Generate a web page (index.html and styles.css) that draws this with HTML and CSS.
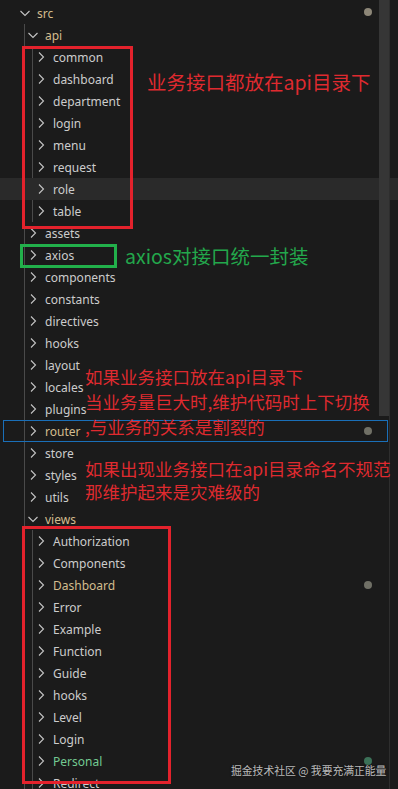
FILE: index.html
```html
<!DOCTYPE html>
<html lang="zh">
<head>
<meta charset="utf-8">
<title>Explorer</title>
<link rel="stylesheet" href="styles.css">
</head>
<body>
<div class="explorer">
  <div class="tree">
    <div class="row l0 mod"><svg class="chev" viewBox="0 0 16 16"><path d="M3.5 6l4.5 4.5L12.5 6"/></svg><span>src</span><i class="dot dot-mod"></i></div>
    <div class="group g1">
      <div class="row l1 mod"><svg class="chev" viewBox="0 0 16 16"><path d="M3.5 6l4.5 4.5L12.5 6"/></svg><span>api</span></div>
      <div class="group g2">
        <div class="row l2"><svg class="chev" viewBox="0 0 16 16"><path d="M6 3.5l4.5 4.5L6 12.5"/></svg><span>common</span></div>
        <div class="row l2"><svg class="chev" viewBox="0 0 16 16"><path d="M6 3.5l4.5 4.5L6 12.5"/></svg><span>dashboard</span></div>
        <div class="row l2"><svg class="chev" viewBox="0 0 16 16"><path d="M6 3.5l4.5 4.5L6 12.5"/></svg><span>department</span></div>
        <div class="row l2"><svg class="chev" viewBox="0 0 16 16"><path d="M6 3.5l4.5 4.5L6 12.5"/></svg><span>login</span></div>
        <div class="row l2"><svg class="chev" viewBox="0 0 16 16"><path d="M6 3.5l4.5 4.5L6 12.5"/></svg><span>menu</span></div>
        <div class="row l2"><svg class="chev" viewBox="0 0 16 16"><path d="M6 3.5l4.5 4.5L6 12.5"/></svg><span>request</span></div>
        <div class="row l2 hover"><svg class="chev" viewBox="0 0 16 16"><path d="M6 3.5l4.5 4.5L6 12.5"/></svg><span>role</span></div>
        <div class="row l2"><svg class="chev" viewBox="0 0 16 16"><path d="M6 3.5l4.5 4.5L6 12.5"/></svg><span>table</span></div>
      </div>
      <div class="row l1"><svg class="chev" viewBox="0 0 16 16"><path d="M6 3.5l4.5 4.5L6 12.5"/></svg><span>assets</span></div>
      <div class="row l1"><svg class="chev" viewBox="0 0 16 16"><path d="M6 3.5l4.5 4.5L6 12.5"/></svg><span>axios</span></div>
      <div class="row l1"><svg class="chev" viewBox="0 0 16 16"><path d="M6 3.5l4.5 4.5L6 12.5"/></svg><span>components</span></div>
      <div class="row l1"><svg class="chev" viewBox="0 0 16 16"><path d="M6 3.5l4.5 4.5L6 12.5"/></svg><span>constants</span></div>
      <div class="row l1"><svg class="chev" viewBox="0 0 16 16"><path d="M6 3.5l4.5 4.5L6 12.5"/></svg><span>directives</span></div>
      <div class="row l1"><svg class="chev" viewBox="0 0 16 16"><path d="M6 3.5l4.5 4.5L6 12.5"/></svg><span>hooks</span></div>
      <div class="row l1"><svg class="chev" viewBox="0 0 16 16"><path d="M6 3.5l4.5 4.5L6 12.5"/></svg><span>layout</span></div>
      <div class="row l1"><svg class="chev" viewBox="0 0 16 16"><path d="M6 3.5l4.5 4.5L6 12.5"/></svg><span>locales</span></div>
      <div class="row l1"><svg class="chev" viewBox="0 0 16 16"><path d="M6 3.5l4.5 4.5L6 12.5"/></svg><span>plugins</span></div>
      <div class="row l1 mod focused"><svg class="chev" viewBox="0 0 16 16"><path d="M6 3.5l4.5 4.5L6 12.5"/></svg><span>router</span><i class="dot dot-mod2"></i></div>
      <div class="row l1"><svg class="chev" viewBox="0 0 16 16"><path d="M6 3.5l4.5 4.5L6 12.5"/></svg><span>store</span></div>
      <div class="row l1"><svg class="chev" viewBox="0 0 16 16"><path d="M6 3.5l4.5 4.5L6 12.5"/></svg><span>styles</span></div>
      <div class="row l1"><svg class="chev" viewBox="0 0 16 16"><path d="M6 3.5l4.5 4.5L6 12.5"/></svg><span>utils</span></div>
      <div class="row l1 mod"><svg class="chev" viewBox="0 0 16 16"><path d="M3.5 6l4.5 4.5L12.5 6"/></svg><span>views</span></div>
      <div class="group g2">
        <div class="row l2"><svg class="chev" viewBox="0 0 16 16"><path d="M6 3.5l4.5 4.5L6 12.5"/></svg><span>Authorization</span></div>
        <div class="row l2"><svg class="chev" viewBox="0 0 16 16"><path d="M6 3.5l4.5 4.5L6 12.5"/></svg><span>Components</span></div>
        <div class="row l2 mod"><svg class="chev" viewBox="0 0 16 16"><path d="M6 3.5l4.5 4.5L6 12.5"/></svg><span>Dashboard</span><i class="dot dot-mod2"></i></div>
        <div class="row l2"><svg class="chev" viewBox="0 0 16 16"><path d="M6 3.5l4.5 4.5L6 12.5"/></svg><span>Error</span></div>
        <div class="row l2"><svg class="chev" viewBox="0 0 16 16"><path d="M6 3.5l4.5 4.5L6 12.5"/></svg><span>Example</span></div>
        <div class="row l2"><svg class="chev" viewBox="0 0 16 16"><path d="M6 3.5l4.5 4.5L6 12.5"/></svg><span>Function</span></div>
        <div class="row l2"><svg class="chev" viewBox="0 0 16 16"><path d="M6 3.5l4.5 4.5L6 12.5"/></svg><span>Guide</span></div>
        <div class="row l2"><svg class="chev" viewBox="0 0 16 16"><path d="M6 3.5l4.5 4.5L6 12.5"/></svg><span>hooks</span></div>
        <div class="row l2"><svg class="chev" viewBox="0 0 16 16"><path d="M6 3.5l4.5 4.5L6 12.5"/></svg><span>Level</span></div>
        <div class="row l2"><svg class="chev" viewBox="0 0 16 16"><path d="M6 3.5l4.5 4.5L6 12.5"/></svg><span>Login</span></div>
        <div class="row l2 new"><svg class="chev" viewBox="0 0 16 16"><path d="M6 3.5l4.5 4.5L6 12.5"/></svg><span>Personal</span><i class="dot dot-new"></i></div>
        <div class="row l2"><svg class="chev" viewBox="0 0 16 16"><path d="M6 3.5l4.5 4.5L6 12.5"/></svg><span>Redirect</span></div>
      </div>
    </div>
  </div>

  <div class="scroll-thumb"></div>
  <div class="scroll-edge"></div>

  <div class="box box-red box-api"></div>
  <div class="box box-green box-axios"></div>
  <div class="box box-red box-views"></div>

  <p class="note note-red note-api">业务接口都放在api目录下</p>
  <p class="note note-green note-axios">axios对接口统一封装</p>
  <p class="note note-red note-mid">如果业务接口放在api目录下<br>当业务量巨大时,维护代码时上下切换<br>,与业务的关系是割裂的</p>
  <p class="note note-red note-low">如果出现业务接口在api目录命名不规范<br>那维护起来是灾难级的</p>

  <p class="watermark">掘金技术社区 @ 我要充满正能量</p>
</div>
</body>
</html>
```

FILE: styles.css
```css
* { box-sizing: border-box; }

html, body {
  margin: 0;
  padding: 0;
  background: #1b1b1b;
  overflow: hidden;
}

.explorer {
  position: relative;
  width: 398px;
  height: 789px;
  overflow: hidden;
  background: #1b1b1b;
  font-family: "Noto Sans", "Open Sans", sans-serif;
  font-size: 12px;
  color: #cccccc;
}

.tree {
  padding-top: 2px;
}

.group.g1 {
  background: linear-gradient(#4a4a4a, #4a4a4a) no-repeat 24px 0 / 1px 100%;
}

.group.g2 {
  background: linear-gradient(#4a4a4a, #4a4a4a) no-repeat 32px 0 / 1px 100%;
}

.row {
  position: relative;
  height: 22px;
  display: flex;
  align-items: center;
  gap: 4px;
  white-space: nowrap;
}

.row.l0 { padding-left: 17px; }
.row.l1 { padding-left: 25px; }
.row.l2 { padding-left: 33px; }

.chev {
  width: 16px;
  height: 16px;
  flex: none;
  fill: none;
  stroke: #c5c5c5;
  stroke-width: 1.1;
}

.row.mod span { color: #d3bd8e; }
.row.new span { color: #73c991; }

.row.hover {
  background: #2a2a2a;
}

.row.focused::after {
  content: "";
  position: absolute;
  left: 3px;
  right: 10px;
  top: 0;
  bottom: 0;
  border: 1px solid #1a6fb8;
}

.dot {
  position: absolute;
  left: 364px;
  top: 7px;
  width: 8px;
  height: 8px;
  border-radius: 50%;
}
.row.l0 .dot { top: 6px; }
.dot-mod { background: #8d8778; }
.dot-mod2 { background: #707066; }
.dot-new { background: #3c7158; }

.scroll-thumb {
  position: absolute;
  left: 379px;
  top: 0;
  width: 10px;
  height: 416px;
  background: #363636;
}

.scroll-edge {
  position: absolute;
  left: 389px;
  top: 0;
  width: 1px;
  height: 789px;
  background: #2e2e2e;
}

.box {
  position: absolute;
  border: 3px solid #e3222c;
}
.box-red { border-color: #e3222c; }
.box-green { border-color: #22b04b; }

.box-api { left: 22px; top: 46px; width: 111px; height: 183px; }
.box-axios { left: 20px; top: 244px; width: 97px; height: 24px; }
.box-views { left: 22px; top: 526px; width: 149px; height: 258px; }

.note {
  position: absolute;
  margin: 0;
  white-space: nowrap;
  font-family: "Noto Sans CJK SC", "Noto Sans", sans-serif;
}
.note-red { color: #df2a2f; }
.note-green { color: #23a84c; }

.note-api { left: 147px; top: 72px; font-size: 19.5px; line-height: 1; }
.note-axios { left: 125px; top: 246px; font-size: 19.5px; line-height: 1; }
.note-mid { left: 85px; top: 364px; font-size: 17.5px; line-height: 25px; }
.note-low { left: 85px; top: 457px; font-size: 17.5px; line-height: 23px; }

.watermark {
  position: absolute;
  left: 231px;
  top: 762px;
  margin: 0;
  font-family: "Noto Sans CJK SC", sans-serif;
  font-size: 10.8px;
  line-height: 16px;
  color: rgba(230, 230, 230, 0.8);
  text-shadow: 0 0 2px rgba(0, 0, 0, 0.6);
  white-space: nowrap;
}
```
